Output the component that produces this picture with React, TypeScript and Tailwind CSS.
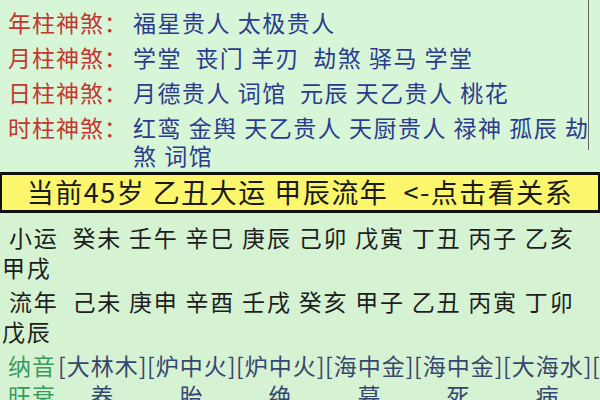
import React from 'react';

const shensha = [
  { label: '年柱神煞', value: '福星贵人 太极贵人' },
  { label: '月柱神煞', value: '学堂  丧门 羊刃  劫煞 驿马 学堂' },
  { label: '日柱神煞', value: '月德贵人 词馆  元辰 天乙贵人 桃花' },
  { label: '时柱神煞', value: '红鸾 金舆 天乙贵人 天厨贵人 禄神 孤辰 劫煞 词馆' },
];

const nayin = ['大林木', '炉中火', '炉中火', '海中金', '海中金', '大海水', '大溪水'];
const wangshuai = ['养', '胎', '绝', '墓', '死', '病', '衰'];

export default function App() {
  return (
    <div className="w-[600px] h-[400px] overflow-hidden bg-[#d5f2d3] font-['Noto_Sans_CJK_SC',sans-serif]">
      {/* 神煞 */}
      <div className="relative h-[172px] bg-[#d7f5d7] pt-[8px] pl-[8px] flex flex-col gap-[7px]">
        {shensha.map((row) => (
          <div key={row.label} className="flex text-[23px] tracking-[1.5px] leading-[28px]">
            <span className="w-[125px] shrink-0 text-[#c4362e] tracking-[1px]">{row.label}：</span>
            <span className="flex-1 text-[#2b3c8e] whitespace-pre-wrap">{row.value}</span>
          </div>
        ))}
        <div className="absolute right-[11px] top-0 h-[150px] w-px bg-[#666]" />
      </div>

      {/* 当前运 */}
      <div className="h-[41px] bg-[#fbf66c] border-y-[3px] border-x-2 border-[#111] flex items-center justify-center text-[27px] tracking-[1.5px] text-[#1a1a1a] whitespace-pre">
        当前45岁 乙丑大运 甲辰流年  {'<-'}点击看关系
      </div>

      {/* 小运 流年 */}
      <div className="pt-[9px] pl-[2px] text-[23px] leading-[30px] text-[#1e1e1e] flex flex-col">
        <div className="whitespace-pre-wrap break-keep tracking-[1.8px]"> 小运  癸未 壬午 辛巳 庚辰 己卯 戊寅 丁丑 丙子 乙亥 甲戌</div>
        <div className="mt-[4px] whitespace-pre-wrap break-keep tracking-[1.8px]"> 流年  己未 庚申 辛酉 壬戌 癸亥 甲子 乙丑 丙寅 丁卯 戊辰</div>
        <div className="mt-[4px] flex whitespace-nowrap pl-[6px] tracking-[1px]">
          <span className="w-[50px] shrink-0 text-[#3b9a5e]">纳音</span>
          {nayin.map((n, i) => (
            <span key={i} className="w-[89px] shrink-0 text-center text-[#35466f]">[{n}]</span>
          ))}
        </div>
        <div className="flex whitespace-nowrap pl-[6px] tracking-[1px]">
          <span className="w-[50px] shrink-0 text-[#3b9a5e]">旺衰</span>
          {wangshuai.map((w, i) => (
            <span key={i} className="w-[89px] shrink-0 text-center text-[#35466f]">{w}</span>
          ))}
        </div>
      </div>
    </div>
  );
}
